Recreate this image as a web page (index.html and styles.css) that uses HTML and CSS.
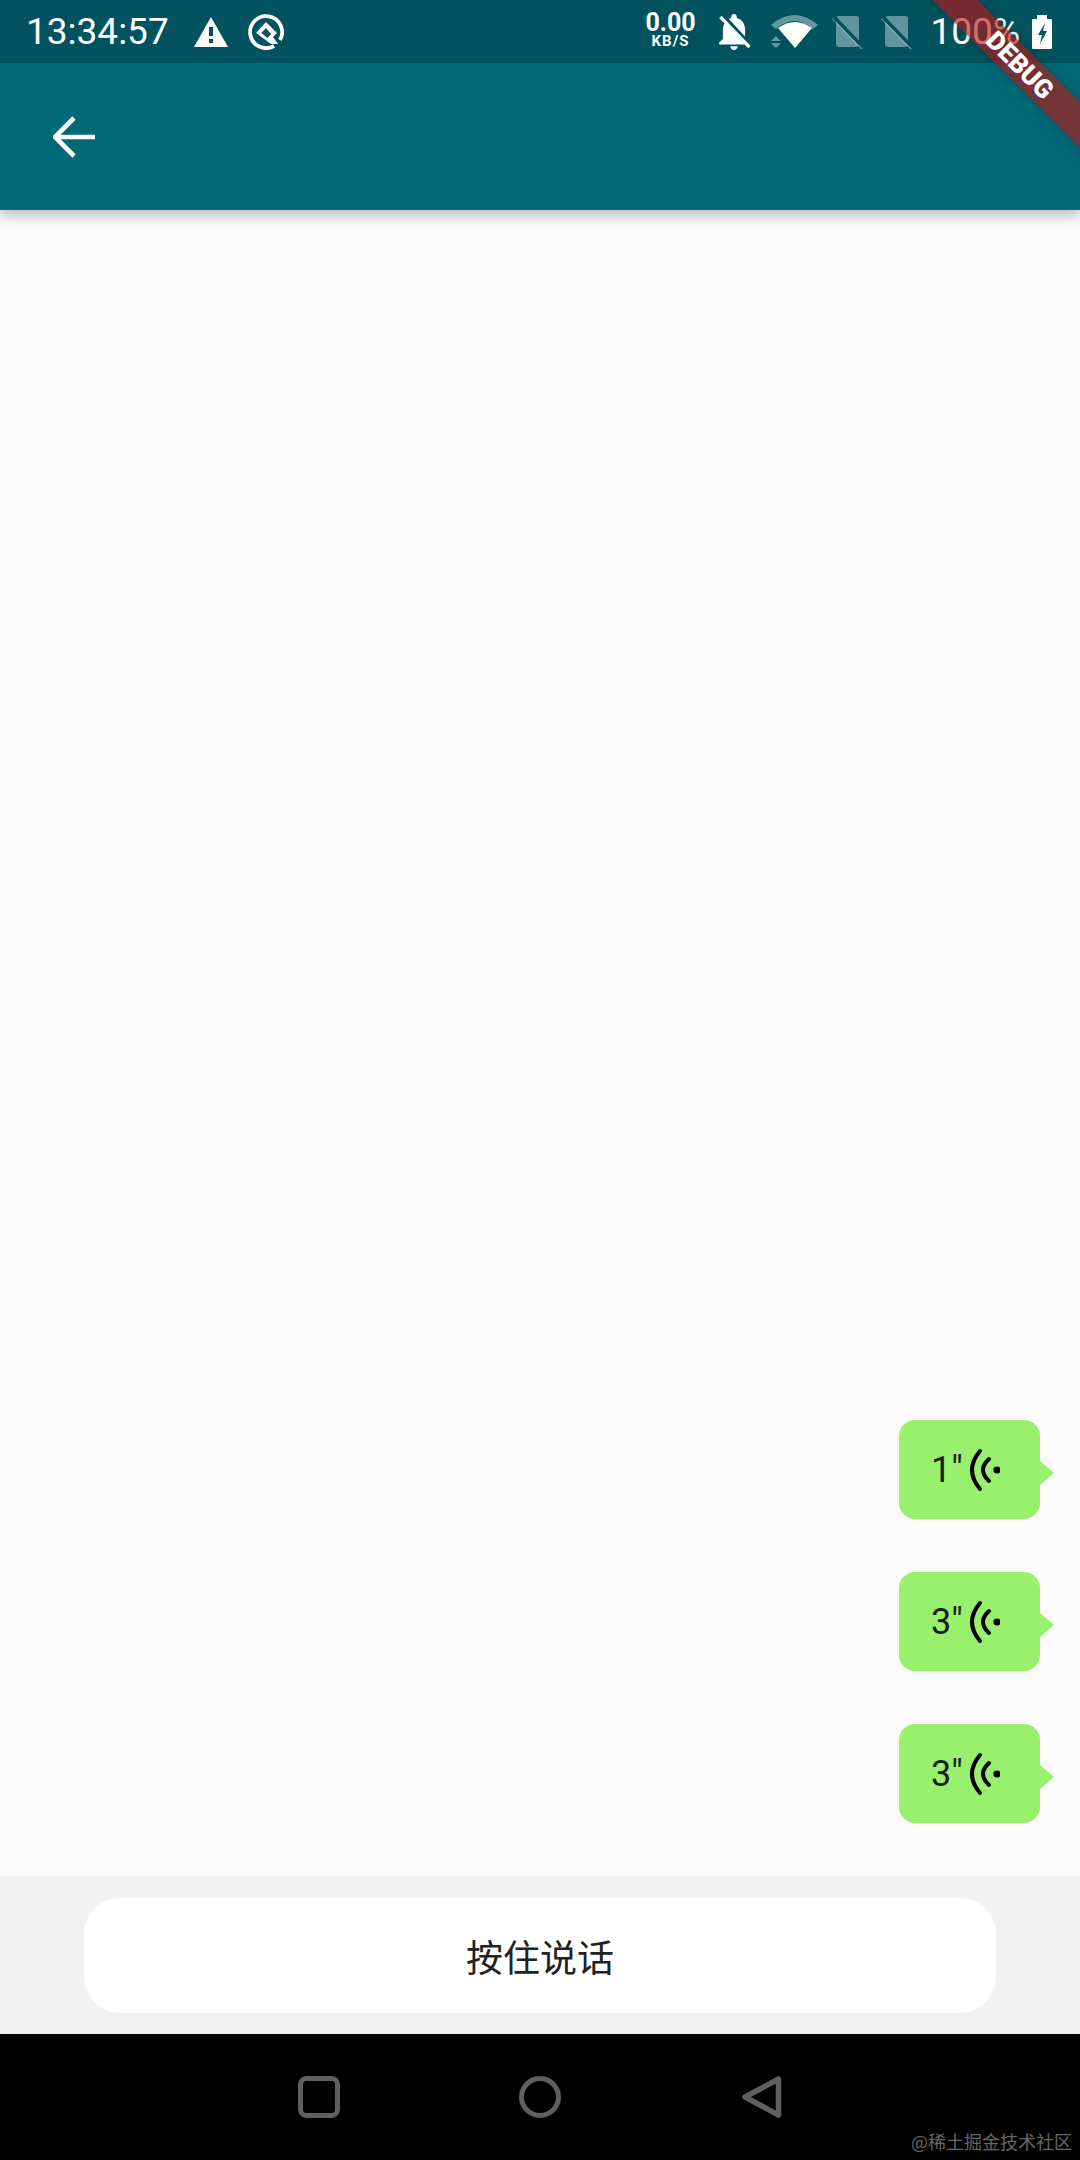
FILE: index.html
```html
<!DOCTYPE html>
<html lang="zh">
<head>
<meta charset="utf-8">
<title>按住说话</title>
<link rel="stylesheet" href="styles.css">
</head>
<body>
<div class="screen">
  <header class="top">
    <div class="status">
      <div class="status-left">
        <span class="clock">13:34:57</span>
        <svg class="i-warn" viewBox="0 0 34 30"><path d="M17 0 34 30H0z" fill="#fff"/><path d="M15 10h4v9h-4zM15 22h4v4h-4z" fill="#00535e"/></svg>
        <svg class="i-q" viewBox="0 0 36 36"><path d="M26 32A16 16 0 1 1 32 26" fill="none" stroke="#fff" stroke-width="3.8"/><path d="M18 8 29 19 25 23 30 30H23L8 19zM18 14 13.5 19 19.500 24 23 20z" fill="#fff" fill-rule="evenodd"/></svg>
      </div>
      <div class="status-right">
        <div class="speed"><span class="speed-num">0.00</span><span class="speed-unit">KB/S</span></div>
        <svg class="i-bell" viewBox="3 2.500 18 19.500"><path d="M20 18.690 7.840 6.140 5.270 3.490 4 4.760l2.800 2.800v.01c-.52.99-.8 2.160-.8 3.420v5l-2 2v1h13.730l2 2L21 19.720zM12 22c1.110 0 2-.89 2-2h-4c0 1.110.89 2 2 2zm6-7.320V11c0-3.080-1.640-5.640-4.500-6.320V4c0-.83-.67-1.500-1.500-1.500s-1.500.67-1.500 1.500v.68c-.15.03-.29.08-.42.12-.1.03-.2.07-.3.11h-.01c-.2.08-.4.17-.59.27-.01 0-.01 0-.02.01L18 14.680z" fill="#fff"/></svg>
        <svg class="i-wifi" viewBox="0 0 48 34"><path d="M0 10Q23.500-10 47 10L42 14Q23.500-2 5 14z" fill="#fff" opacity=".4"/><path d="M24 33 7 13Q24 1 41 13z" fill="#fff"/><path d="M5 21 10 26H0zM0 28H10L5 33z" fill="#fff" opacity=".4"/></svg>
        <svg class="i-sim" viewBox="0 0 32 34"><rect x="4" y="1" width="23" height="31" rx="3" fill="#fff" opacity=".38"/><path d="M0 3 30 34" stroke="#fff" stroke-opacity=".38" stroke-width="1.500"/><path d="M1 1 28 29" stroke="#00535e" stroke-width="3.500"/></svg>
        <svg class="i-sim" viewBox="0 0 32 34"><rect x="4" y="1" width="23" height="31" rx="3" fill="#fff" opacity=".38"/><path d="M0 3 30 34" stroke="#fff" stroke-opacity=".38" stroke-width="1.500"/><path d="M1 1 28 29" stroke="#00535e" stroke-width="3.500"/></svg>
        <span class="pct">100%</span>
        <svg class="i-batt" viewBox="0 0 20 34"><path d="M5 0h10v4h4q1 0 1 1v28q0 1-1 1H1q-1 0-1-1V5q0-1 1-1h4z" fill="#fff"/><path d="M13 8 6 20h4l-2 9 7-13h-4z" fill="#00535e"/></svg>
      </div>
    </div>
    <div class="appbar">
      <svg class="i-back" viewBox="0 0 42 42"><path d="M42 21H5M21 2 2 21l19 19" fill="none" stroke="#fff" stroke-width="4.600"/></svg>
    </div>
  </header>

  <main class="messages">
    <div class="msg">
      <div class="bubble"><span>1"</span><svg class="i-voice" viewBox="0 0 32 44"><path d="M12 3Q-4 22 12 41M21 11Q9 22 21 33" fill="none" stroke="#000" stroke-width="4" stroke-linecap="round"/><circle cx="29" cy="22" r="3.600"/></svg></div>
      <i class="tail"></i>
    </div>
    <div class="msg">
      <div class="bubble"><span>3"</span><svg class="i-voice" viewBox="0 0 32 44"><path d="M12 3Q-4 22 12 41M21 11Q9 22 21 33" fill="none" stroke="#000" stroke-width="4" stroke-linecap="round"/><circle cx="29" cy="22" r="3.600"/></svg></div>
      <i class="tail"></i>
    </div>
    <div class="msg">
      <div class="bubble"><span>3"</span><svg class="i-voice" viewBox="0 0 32 44"><path d="M12 3Q-4 22 12 41M21 11Q9 22 21 33" fill="none" stroke="#000" stroke-width="4" stroke-linecap="round"/><circle cx="29" cy="22" r="3.600"/></svg></div>
      <i class="tail"></i>
    </div>
  </main>

  <div class="composer"><button class="talk">按住说话</button></div>

  <nav class="navbar">
    <svg class="nav-i" viewBox="0 0 42 42"><rect x="2.500" y="2.500" width="37" height="37" rx="6" fill="none" stroke="#5f5f5f" stroke-width="5"/></svg>
    <svg class="nav-i" viewBox="0 0 42 42"><circle cx="21" cy="21" r="18.500" fill="none" stroke="#5f5f5f" stroke-width="5"/></svg>
    <svg class="nav-i" viewBox="0 0 42 42"><path d="M38.500 3 5 21 38.500 39z" fill="none" stroke="#5f5f5f" stroke-width="5.500" stroke-linejoin="round"/></svg>
  </nav>

  <span class="watermark">@稀土掘金技术社区</span>
  <div class="debug">DEBUG</div>
</div>
</body>
</html>
```
FILE: styles.css
```css
* { box-sizing: border-box; }
html, body { margin: 0; padding: 0; }
body { width: 1080px; height: 2160px; overflow: hidden; font-family: Roboto, "Noto Sans CJK SC", sans-serif; }
.screen { position: relative; width: 1080px; height: 2160px; display: flex; flex-direction: column; overflow: hidden; background: #fafafa; }

.top { flex: none; position: relative; z-index: 1; box-shadow: 0 4px 14px rgba(0,0,0,.3); }
.status { height: 63px; padding: 0 28px 0 26px; display: flex; justify-content: space-between; align-items: center; background: #00535e; color: #fff; }
.status-left, .status-right { display: flex; align-items: center; }
.clock { font-size: 37px; font-weight: 400; line-height: 42px; }
.i-warn { width: 34px; height: 30px; margin-left: 25px; }
.i-q { width: 36px; height: 36px; margin-left: 20px; }
.speed { display: flex; flex-direction: column; align-items: center; width: 50px; margin-right: 21px; margin-top: -3px; }
.speed-num { font-size: 25px; font-weight: 700; line-height: 23px; }
.speed-unit { font-size: 15px; font-weight: 700; line-height: 15px; letter-spacing: 1px; }
.i-bell { width: 34px; height: 36px; margin-right: 20px; }
.i-wifi { width: 48px; height: 34px; margin-right: 13px; }
.i-sim { width: 32px; height: 34px; margin-right: 17px; }
.i-sim + .i-sim { margin-right: 18px; }
.pct { font-size: 37px; font-weight: 400; line-height: 42px; margin-right: 12px; }
.i-batt { width: 20px; height: 34px; }

.appbar { height: 147px; padding: 0 0 0 53px; display: flex; align-items: center; background: #006975; }
.i-back { width: 42px; height: 42px; }

.messages { flex: 1; display: flex; flex-direction: column; justify-content: flex-end; align-items: flex-end; gap: 53px; padding: 0 26px 53px 0; }
.msg { display: flex; align-items: center; }
.bubble { width: 141px; height: 99px; padding-left: 32px; display: flex; align-items: center; gap: 5px; border-radius: 16px; background: #99f06d; color: #1c1c1c; font-size: 36px; }
.tail { width: 0; height: 0; margin-top: 6px; border-style: solid; border-width: 12px 0 12px 14px; border-color: transparent transparent transparent #99f06d; }
.i-voice { width: 32px; height: 44px; }

.composer { flex: none; height: 158px; padding: 22px 84px 21px; background: #f2f2f2; }
.talk { display: block; width: 100%; height: 115px; border: 0; border-radius: 36px; background: #fff; color: #222; font-family: inherit; font-size: 37px; }

.navbar { flex: none; height: 126px; padding-top: 42px; display: flex; justify-content: center; align-items: flex-start; gap: 179px; background: #000; }
.nav-i { width: 42px; height: 42px; }

.watermark { position: absolute; right: 8px; bottom: 7px; font-family: "Noto Sans CJK SC", sans-serif; font-size: 18px; line-height: 24px; color: #666; }
.debug { position: absolute; z-index: 2; left: 870px; top: 49px; width: 300px; height: 32px; transform: rotate(45deg); display: flex; align-items: center; justify-content: center; background: rgba(185,20,20,.62); box-shadow: 0 0 14px rgba(0,0,0,.22); color: #fff; font-size: 26px; font-weight: 900; line-height: 32px; }
```
